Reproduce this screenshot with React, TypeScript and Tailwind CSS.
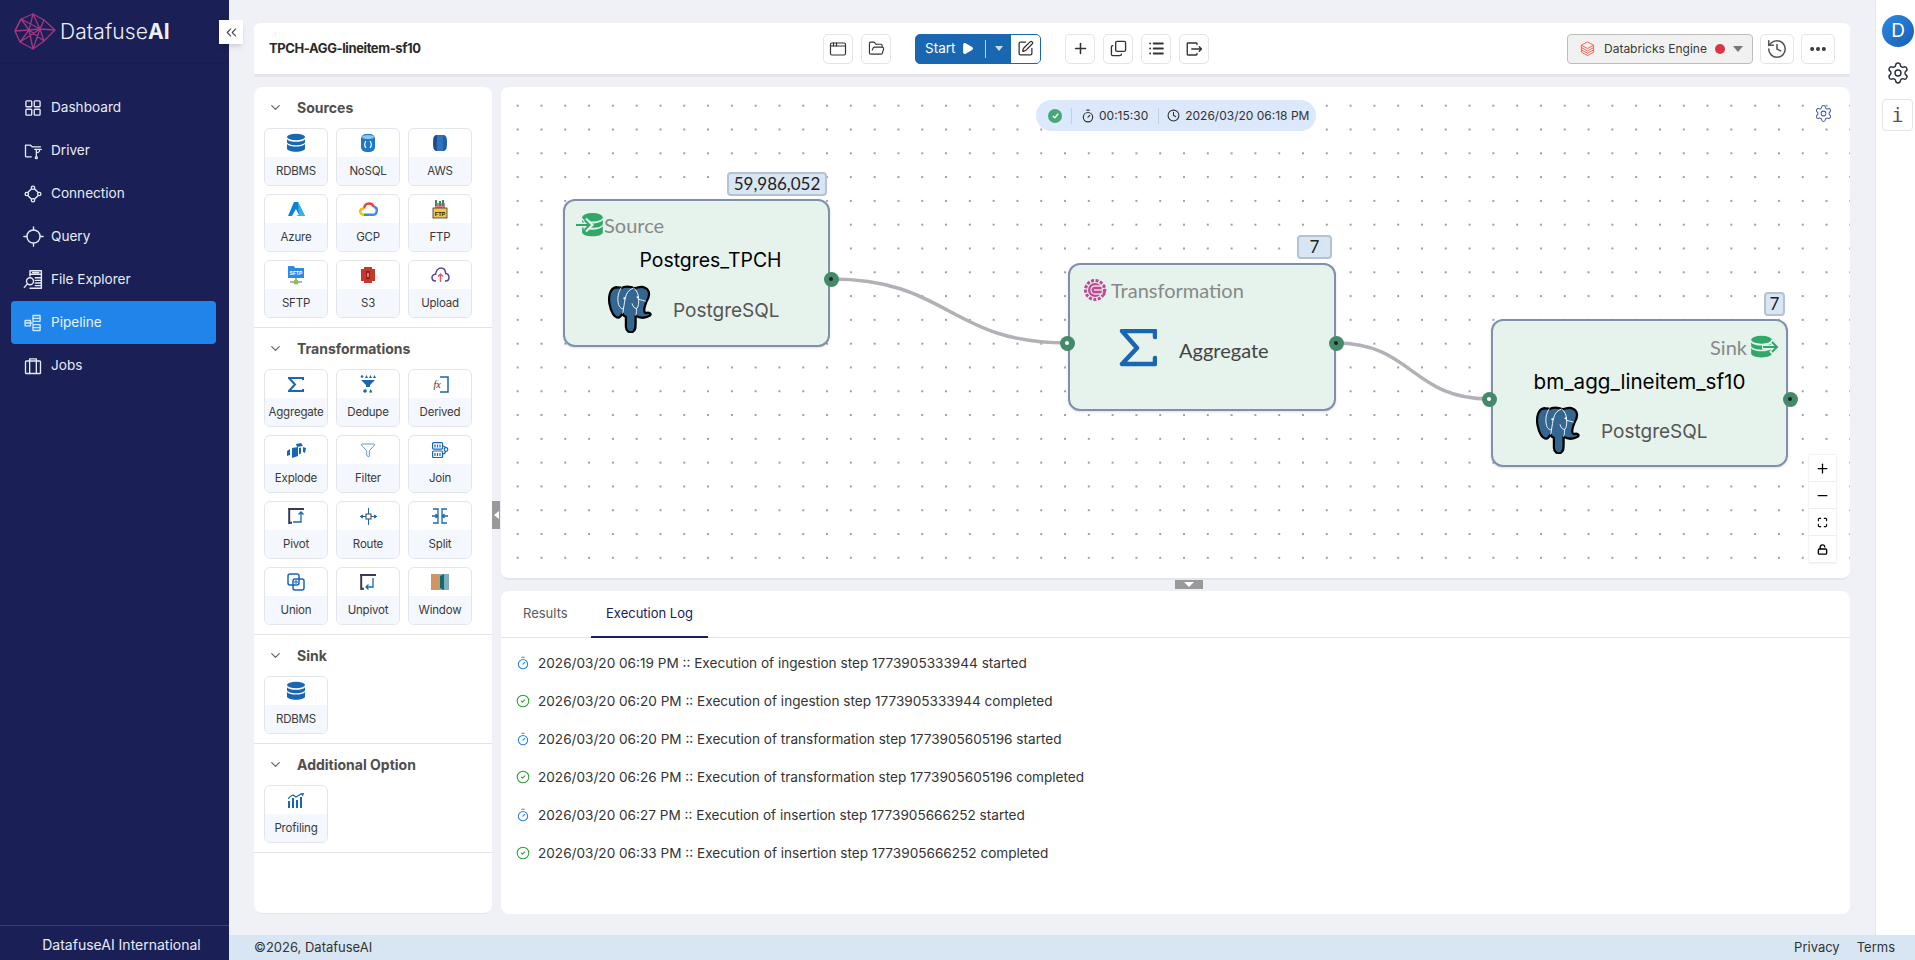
import React from "react";
import {
  ChevronDown, ChevronsLeft, Play, SquarePen, Plus, Copy, List, FolderOpen, AppWindow, History, Ellipsis,
  Settings, Timer, Clock, CircleCheck, Maximize, LockOpen, Minus, Funnel,
} from "lucide-react";

const B = "#1a67b1";

const S = ({ children, s = 20, vb = "0 0 24 24", sw = 1.6, c = "currentColor" }: any) => (
  <svg width={s} height={s} viewBox={vb} fill="none" stroke={c} strokeWidth={sw} strokeLinecap="round" strokeLinejoin="round">
    {children}
  </svg>
);

const Logo = () => (
  <svg width="42" height="38" viewBox="0 0 42 38" fill="none" stroke="#a5367f" strokeWidth="1.300" strokeLinejoin="round">
    <path d="M1 18 L7 6 L19 1 L30 7 L41 17 L30 28 L19 36 L6 29 Z" />
    <path d="M7 6 L15 17 L19 1 L26 16 L30 7 M1 18 L15 17 L26 16 L41 17 M15 17 L6 29 M15 17 L19 36 M26 16 L19 36 M26 16 L30 28 M7 6 L1 18 M7 6 L26 16 M6 29 L26 16 M15 17 L30 28" />
  </svg>
);

const navIcons: Record<string, React.ReactNode> = {
  Dashboard: <S s={20}><rect x="3.5" y="3.5" width="7" height="7" rx="1" /><rect x="13.5" y="3.5" width="7" height="7" rx="1" /><rect x="3.5" y="13.5" width="7" height="7" rx="1" /><rect x="13.5" y="13.5" width="7" height="7" rx="1" /></S>,
  Driver: <S s={20}><path d="M10 19H4a1 1 0 0 1-1-1V5h6l2 2h10" /><path d="M14 10h8M16 10v8M20 10c0 4-2 4-4 4" /><circle cx="16" cy="20" r="1.2" /></S>,
  Connection: <S s={20}><path d="M6 10l4-4M14 6l4 4M18 14l-4 4M10 18l-4-4" /><circle cx="12" cy="4.5" r="2" /><circle cx="19.5" cy="12" r="2" /><circle cx="12" cy="19.5" r="2" /><circle cx="4.5" cy="12" r="2" /></S>,
  Query: <S s={21}><circle cx="12" cy="12" r="7.5" /><path d="M12 1v3M12 20v3M1 12h3M20 12h3" /></S>,
  "File Explorer": <S s={21}><path d="M8 8V2h13v20H8" /><path d="M8 6h13M14 10h7M14 13h7M14 16h7M14 19h7M11 4h7" /><circle cx="8" cy="14" r="4" /><path d="M5 17l-3.5 4" /></S>,
  Pipeline: <S s={20} c="#cfe6ff"><rect x="2.5" y="9" width="6.5" height="6.5" /><rect x="12" y="3" width="8.5" height="7" /><rect x="12" y="14" width="8.5" height="7" /><path d="M2.500 12h6.500M12 6.500h8.500M12 17.500h8.500M9 12h3" /></S>,
  Jobs: <S s={20}><rect x="3" y="6" width="18" height="15" rx="1" /><path d="M8 6v15M16 6v15M8 6V3.500h8V6" /></S>,
};

const Db = ({ c = B, s = 20 }: any) => (
  <svg width={s} height={s} viewBox="0 0 20 20" fill={c}>
    <ellipse cx="10" cy="4" rx="9" ry="3.200" />
    <path d="M1 6.200c1.500 1.800 5 2.600 9 2.600s7.500-.8 9-2.600V9c0 1.800-4 3.200-9 3.200S1 10.800 1 9z" />
    <path d="M1 11c1.500 1.800 5 2.600 9 2.600s7.500-.8 9-2.600v4.500c0 1.800-4 3.200-9 3.200s-9-1.400-9-3.200z" />
  </svg>
);

const ico: Record<string, React.ReactNode> = {
  RDBMS: <Db />,
  NoSQL: (
    <svg width="16" height="20" viewBox="0 0 16 20"><rect x="1" y="1" width="14" height="18" rx="5" fill="#1e78c8" /><ellipse cx="8" cy="4" rx="6" ry="2" fill="#8fc4ee" /><path d="M6 8c-1.500 2-1.500 5 0 7M10 8c1.500 2 1.500 5 0 7" stroke="#fff" strokeWidth="1.200" fill="none" /></svg>
  ),
  AWS: (
    <svg width="16" height="18" viewBox="0 0 16 18"><path d="M5 1C2 1 1 3 1 9s1 8 4 8z" fill="#1a4f8f" /><rect x="5" y="1" width="6" height="16" fill="#2e73b8" /><path d="M11 1c3 0 4 2 4 8s-1 8-4 8z" fill="#1f5fa3" /></svg>
  ),
  Azure: (
    <svg width="18" height="16" viewBox="0 0 18 16"><path d="M7 1h4l7 14H9l3-1-3-6-4 7H1z" fill="#0a84d6" /><path d="M11 1l7 14h-6z" fill="#34b2ee" /></svg>
  ),
  GCP: (
    <svg width="19" height="15" viewBox="0 0 19 15" fill="none" strokeWidth="2.400"><path d="M5 6.500C5.500 3 8 1.500 10 1.500c2.500 0 4 1.300 4.700 3.300" stroke="#ea4335" /><path d="M14.700 4.800c2.400.4 3.300 2.300 3.100 4" stroke="#4285f4" /><path d="M17.800 8.800c-.2 2.500-2 4-4 4H9" stroke="#4285f4" /><path d="M9 12.800H5" stroke="#34a853" /><path d="M5 12.800c-2.300 0-3.800-1.500-3.800-3.300 0-2 1.600-3 3.800-3" stroke="#fbbc05" /></svg>
  ),
  FTP: (
    <svg width="16" height="20" viewBox="0 0 16 20"><path d="M3 4h10v6H3z" fill="#e8769a" /><path d="M4 1v6M8 2v5M11 1v6" stroke="#3a8a5a" strokeWidth="2" /><rect x="1" y="9" width="14" height="10" fill="#f3c64a" stroke="#333" strokeWidth=".8" /><text x="8" y="16.500" fontSize="5.500" fontWeight="700" textAnchor="middle" fill="#222" fontFamily="Liberation Sans">FTP</text></svg>
  ),
  SFTP: (
    <svg width="16" height="20" viewBox="0 0 16 20"><path d="M0 1h6l1 2h9v10H0z" fill="#2a8ce0" /><text x="8" y="10" fontSize="5" fontWeight="700" textAnchor="middle" fill="#fff" fontFamily="Liberation Sans">SFTP</text><path d="M8 13v3M2 17h12" stroke="#666" strokeWidth="1" /><circle cx="8" cy="17" r="2.500" fill="#8bc34a" /></svg>
  ),
  S3: (
    <svg width="14" height="16" viewBox="0 0 14 16"><path d="M3 0h8v2h3v12h-3v2H3v-2H0V2h3z" fill="#c6382e" /><path d="M5 4h4v8H5z" fill="#8f241c" /><path d="M6 6h2v4H6z" fill="#e67a6e" /></svg>
  ),
  Upload: (
    <svg width="19" height="16" viewBox="0 0 19 16" fill="none" strokeWidth="1.500"><path d="M5 14H4.500C2 14 1 12 1 10.500S2.500 7.200 4.500 7.300C5 3.500 7.500 1 10 1c2.500 0 4.500 2.200 4.700 5.500 2 .2 3.300 2 3.300 4s-1.300 3.500-3.500 3.500H14" stroke="#5b3f9e" /><path d="M9.500 15V7M7 9.500l2.500-2.500 2.500 2.500" stroke="#e85c6a" /></svg>
  ),
  Aggregate: (
    <svg width="16" height="15" viewBox="0 0 16 15" fill="none" stroke={B} strokeWidth="2"><path d="M15 3V1H1l6 6.500L1 14h14v-2" /></svg>
  ),
  Dedupe: (
    <svg width="16" height="18" viewBox="0 0 16 18" fill={B}><circle cx="2" cy="1.500" r="1.300" /><path d="M5 3l1.500-3L8 3zM9 3l1.500-3L12 3zM13 3l1.500-3L16 3z" /><path d="M1 5h14l-5 5v2H6v-2z" /><circle cx="5" cy="16" r="1.800" /><path d="M9 17.500l1.700-3.500 1.700 3.500z" /></svg>
  ),
  Derived: (
    <svg width="18" height="17" viewBox="0 0 18 17" fill="none"><path d="M9 1h8v15H9" stroke={B} strokeWidth="1.500" /><text x="6" y="12" fontSize="10" fontStyle="italic" textAnchor="middle" fill="#333" fontFamily="Liberation Serif">fx</text></svg>
  ),
  Explode: (
    <svg width="19" height="15" viewBox="0 0 19 15" fill={B}><path d="M5 5l6-1v9l-6 2z" /><path d="M9 1l5-1 2 3-6 1z" /><path d="M12 5l2-.5v6l-2 1z" /><path d="M0 8l3-2v6l-3 1zM16 4l3 1-1 5-2-1z" /></svg>
  ),
  Filter: <Funnel size={16} color={B} strokeWidth={1} />,
  Join: (
    <svg width="17" height="16" viewBox="0 0 17 16" fill="none" stroke={B} strokeWidth="1.200"><rect x=".6" y=".6" width="10" height="6.500" rx="1" /><rect x=".6" y="9" width="10" height="6.500" rx="1" /><path d="M3 2.500v3M5.500 2.500v3M8 2.500v3M3 11v3M5.500 11v3M8 11v3M10.600 4c2 0 3 .5 3 2M10.600 12c2 0 3-1 3-3" /><circle cx="14" cy="7.500" r="1.800" /></svg>
  ),
  Pivot: (
    <svg width="16" height="16" viewBox="0 0 16 16" fill="none"><path d="M0 1h16M1.200 1v15M1 14.800h3" stroke="#3a3a55" strokeWidth="2" /><path d="M5 14h8V4M10.500 6.500L13 4l2.500 2.500" stroke={B} strokeWidth="1.300" /></svg>
  ),
  Route: (
    <svg width="17" height="17" viewBox="0 0 17 17" fill="none" stroke={B} strokeWidth="1"><rect x="6" y="6" width="5" height="5" stroke="#3a3a55" /><path d="M8.500 0v6M8.500 11v6M0 8.500h6M11 8.500h6" /><path d="M.5 8.500l2-1.500v3zM16.500 8.500l-2-1.500v3z" fill={B} /></svg>
  ),
  Split: (
    <svg width="16" height="16" viewBox="0 0 16 16" fill="none" stroke={B} strokeWidth="1.300"><path d="M1 1h5v14H1M15 1h-5v14h5M0 8h5M16 8h-5M3.500 6l2 2-2 2M12.500 6l-2 2 2 2" /></svg>
  ),
  Union: (
    <svg width="18" height="18" viewBox="0 0 18 18" fill="none" stroke={B} strokeWidth="1.500"><rect x="1" y="1" width="11" height="11" rx="2" /><rect x="6" y="6" width="11" height="11" rx="2" /><path d="M9 7v4M7 9h4" strokeWidth="1" /></svg>
  ),
  Unpivot: (
    <svg width="16" height="16" viewBox="0 0 16 16" fill="none"><path d="M0 1h16M1.200 1v15M1 14.800h3" stroke="#3a3a55" strokeWidth="2" /><path d="M13 4v9H6M8.500 10.500L6 13l2.500 2.500" stroke={B} strokeWidth="1.300" /></svg>
  ),
  Window: (
    <svg width="18" height="16" viewBox="0 0 18 16"><rect width="18" height="16" fill="#7fb0b8" /><path d="M0 0h7l2 2v12l-2 2H0z" fill="#d29463" /><path d="M9 2l4-2v16l-4-2z" fill="#0f6a78" /></svg>
  ),
  Profiling: (
    <svg width="16" height="15" viewBox="0 0 16 15" fill={B}><rect x="0" y="8" width="2" height="7" /><rect x="4" y="5" width="2" height="10" /><rect x="8" y="7" width="2" height="8" /><rect x="12" y="4" width="2" height="11" /><path d="M0 6c2-3 3-3 5-4l3 2 5-3" fill="none" stroke={B} strokeWidth="1.200" /><path d="M12 .2l4-.2-1 3.500z" /></svg>
  ),
};

const Card = ({ label }: { label: string }) => (
  <div className="w-[64px] h-[58px] rounded-[6px] border border-[#e2e5ec] overflow-hidden flex flex-col bg-white">
    <div className="h-[28px] flex items-center justify-center">{ico[label]}</div>
    <div className="h-[28px] pt-[1px] flex items-center justify-center bg-[#f4f7fd] text-[11.5px] text-[#3a3a3a] tracking-[-0.2px] whitespace-nowrap">{label}</div>
  </div>
);

const Section = ({ title, items }: { title: string; items: string[] }) => (
  <div className="border-b border-[#e3e3e6] pb-[9px] pl-[10px]">
    <div className="h-[41px] flex items-center text-[14px] font-bold text-[#4e4e4e]">
      <ChevronDown size={15} className="ml-[4px] mr-[14px] text-[#666]" />
      {title}
    </div>
    <div className="grid grid-cols-[64px_64px_64px] gap-x-[8px] gap-y-[8px]">
      {items.map((i) => (
        <Card key={i} label={i} />
      ))}
    </div>
  </div>
);

const Elephant = () => (
  <svg width="46" height="48" viewBox="1 1 43 47">
    <path d="M9 3C3 4 1 12 2.500 20c1.300 7 4.500 13 8.500 13 2 0 3-2 4-4 1 2 2 3 3.500 3v10c0 4 3.500 6 6.500 5 3-1 3-5 3-9v-7c4 2.500 9.500 2.500 14 0 2-2-1-3.500-4-2.500-3-1-1-7 .5-11 4.500-7 3-13-3-14.500-3-.8-6.500 1-9 1-4-2-10-2-12 0-2-1-3.500-1-5.500-.5z" fill="#336791" stroke="#000" strokeWidth="2.200" strokeLinejoin="round" />
    <path d="M14 3.500c-3 5-4 10-3 15 .5 4 3 6 5 6 1-4 1-9 3-14 1-3 3-5 7-6.500M26 4c3 2 5 6 5 11 0 4 0 7-2 9-2 0-4-2-4.500-5M15 29c1-2 1-3 1-5M28 31c1-3 1-5 1-7M31 15c3 1 5 1 7 2" fill="none" stroke="#fff" strokeWidth=".9" />
    <circle cx="17" cy="14" r="1.100" fill="#fff" />
    <circle cx="30" cy="13" r="1.100" fill="#fff" />
  </svg>
);

const Handle = ({ type, x, y }: { type: "in" | "out"; x: number; y: number }) => (
  <div style={{ left: x - 7.5, top: y - 7.5 }} className="absolute w-[15px] h-[15px] rounded-full bg-[#45896a] flex items-center justify-center">
    <div className={type === "in" ? "w-[4px] h-[4px] rounded-full bg-white" : "w-[4px] h-[4px] rounded-full bg-[#12281e]"} />
  </div>
);

const Count = ({ children, style }: any) => (
  <div style={style} className="absolute h-[24px] flex items-center justify-center bg-[#d8e6f3] border-2 border-[#b4c2d4] rounded-[4px] font-['Lato'] text-[17px] text-[#222]">
    {children}
  </div>
);

const Node = ({ style, children }: any) => (
  <div style={style} className="absolute rounded-[12px] border-2 border-[#8090ab] bg-[#e6f2ec] flex flex-col shadow-sm">
    {children}
  </div>
);

const G = "#2fa868";
const SourceIc = () => (
  <svg width="28" height="26" viewBox="0 0 28 26">
    <g transform="translate(5 0) scale(1.150 1.300)"><ellipse cx="10" cy="4" rx="9" ry="3.300" fill={G} /><path d="M1 6.200c1.500 1.800 5 2.600 9 2.600s7.500-.8 9-2.600V9c0 1.800-4 3.200-9 3.200S1 10.800 1 9z" fill={G} /><path d="M1 11c1.500 1.800 5 2.600 9 2.600s7.500-.8 9-2.600v4.500c0 1.800-4 3.200-9 3.200s-9-1.400-9-3.200z" fill={G} /></g>
    <path d="M0 13h14M9 7.500l5.500 5.500L9 18.500" fill="none" stroke="#e6f2ec" strokeWidth="5" />
    <path d="M0 13h13M8.500 8l5 5-5 5" fill="none" stroke={G} strokeWidth="2" />
  </svg>
);
const SinkIc = () => (
  <svg width="29" height="24" viewBox="0 0 29 24">
    <g transform="scale(1.150 1.200)"><ellipse cx="10" cy="4" rx="9" ry="3.300" fill={G} /><path d="M1 6.200c1.500 1.800 5 2.600 9 2.600s7.500-.8 9-2.600V9c0 1.800-4 3.200-9 3.200S1 10.800 1 9z" fill={G} /><path d="M1 11c1.500 1.800 5 2.600 9 2.600s7.500-.8 9-2.600v4.500c0 1.800-4 3.200-9 3.200s-9-1.400-9-3.200z" fill={G} /></g>
    <path d="M12 12h15M21 5.500l6.500 6.500-6.500 6.500" fill="none" stroke="#e6f2ec" strokeWidth="5" />
    <path d="M13 12h14M22 7l5 5-5 5" fill="none" stroke={G} strokeWidth="2" />
  </svg>
);
const TransIc = () => (
  <svg width="25" height="24" viewBox="0 0 25 24" fill="none">
    <circle cx="12" cy="12" r="9.500" stroke="#bb4a92" strokeWidth="3" strokeDasharray="3 1.500" />
    <circle cx="12" cy="12" r="7" fill="#bb4a92" />
    <path d="M20 8h-8c-3 0-4 2-4 4s1 4 4 4h8M20 12h-9" stroke="#f2d7e8" strokeWidth="1.300" />
    <circle cx="21" cy="8" r="1.500" fill="#bb4a92" /><circle cx="22" cy="12" r="1.500" fill="#bb4a92" /><circle cx="21" cy="16" r="1.500" fill="#bb4a92" />
  </svg>
);

const logs: [string, boolean][] = [
  ["2026/03/20 06:19 PM :: Execution of ingestion step 1773905333944 started", false],
  ["2026/03/20 06:20 PM :: Execution of ingestion step 1773905333944 completed", true],
  ["2026/03/20 06:20 PM :: Execution of transformation step 1773905605196 started", false],
  ["2026/03/20 06:26 PM :: Execution of transformation step 1773905605196 completed", true],
  ["2026/03/20 06:27 PM :: Execution of insertion step 1773905666252 started", false],
  ["2026/03/20 06:33 PM :: Execution of insertion step 1773905666252 completed", true],
];

const TB = ({ children, cls = "w-[30px]" }: any) => (
  <div className={`h-[30px] ${cls} rounded-[5px] border border-[#e4e4e8] bg-white flex items-center justify-center text-[#333]`}>{children}</div>
);

export default function App() {
  return (
    <div className="w-[1915px] h-[960px] flex overflow-hidden bg-[#eff1f6] font-['Inter',sans-serif]">
      {/* Sidebar */}
      <aside className="relative w-[229px] shrink-0 bg-[#1a2055] flex flex-col text-[#e8ebf5]">
        <div className="h-[64px] border-b border-[#171c4c] flex items-center pl-[14px] gap-[4px]">
          <Logo />
          <span className="text-[21px] font-light tracking-[0.1px] text-[#eef0f8]">Datafuse<b className="font-bold">AI</b></span>
        </div>
        <button className="absolute left-[219px] top-[20px] w-[24px] h-[24px] bg-white shadow-md flex items-center justify-center text-[#444]">
          <ChevronsLeft size={17} strokeWidth={1.500} />
        </button>
        <nav className="pt-[22px] pl-[11px] pr-[13px] flex flex-col">
          {Object.keys(navIcons).map((n) => (
            <div key={n} className={n === "Pipeline" ? "h-[43px] rounded-[4px] bg-[#1f85ea] flex items-center pl-[11px] gap-[7px] text-[13.6px] text-[#eaf3fd]" : "h-[43px] flex items-center pl-[11px] gap-[7px] text-[13.6px]"}>
              <span className="w-[22px] flex justify-center">{navIcons[n]}</span>
              {n}
            </div>
          ))}
        </nav>
        <div className="mt-auto h-[35px] border-t border-[#3a3f6e] pt-[3px] pl-[14px] flex items-center justify-center text-[14px]">DatafuseAI International</div>
      </aside>

      {/* Main */}
      <div className="flex-1 flex flex-col min-w-0">
        <div className="h-[935px] flex">
          <div className="flex-1 min-w-0 pt-[23px] pl-[25px] pr-[25px] pb-[21px] flex flex-col gap-[11px]">
            {/* Toolbar */}
            <header className="h-[54px] -mb-[1px] shrink-0 rounded-t-[6px] bg-white border-b-[3px] border-[#e3e5ea] flex items-center pl-[15px] pr-[15px]">
              <div className="w-[554px] text-[13px] font-bold tracking-[-0.4px] text-[#2a2a2a] whitespace-nowrap">TPCH-AGG-lineitem-sf10</div>
              <div className="flex gap-[8px]">
                <TB><AppWindow size={18} strokeWidth={1.600} /></TB>
                <TB><FolderOpen size={17} strokeWidth={1.600} /></TB>
              </div>
              <div className="ml-[24px] h-[30px] w-[126px] flex rounded-[5px] overflow-hidden border border-[#1a67b1] bg-[#1a67b1] text-white">
                <div className="flex-1 flex items-center pl-[9px] text-[13.5px]">
                  Start
                  <Play size={13} fill="#fff" className="ml-[6px]" />
                  <span className="ml-[11px] h-[18px] w-px bg-[#b7d2ec]" />
                  <span className="ml-[9px] border-x-[4px] border-x-transparent border-t-[5px] border-t-[#cfe0f1]" />
                </div>
                <div className="w-[29px] bg-white flex items-center justify-center text-[#333]"><SquarePen size={17} strokeWidth={1.800} /></div>
              </div>
              <div className="ml-[24px] flex gap-[8px]">
                <TB><Plus size={17} strokeWidth={2.200} /></TB>
                <TB><Copy size={17} strokeWidth={1.900} className="-scale-x-100 rotate-180" /></TB>
                <TB><List size={17} strokeWidth={2.600} /></TB>
                <TB>
                  <S s={18} sw={1.800}><path d="M16 6V5a1 1 0 0 0-1-1H4a1 1 0 0 0-1 1v14a1 1 0 0 0 1 1h11a1 1 0 0 0 1-1v-1" /><path d="M9 12h13M19 9l3 3-3 3" /></S>
                </TB>
              </div>
              <div className="ml-auto flex gap-[7px]">
                <div className="h-[30px] w-[186px] rounded-[4px] border border-[#bdbdbd] bg-[#f1f1f1] flex items-center pl-[12px] text-[12px] text-[#3a3a3a]">
                  <svg width="15" height="15" viewBox="0 0 16 16" fill="none" stroke="#f0604d" strokeWidth="1"><path d="M8 1l6.500 3.500L8 8 1.500 4.500zM1.500 7L8 10.500 14.500 7M1.500 9.500L8 13l6.500-3.500M1.500 12L8 15.500l6.500-3.500M1.500 4.500V12M14.500 4.500V12" /></svg>
                  <span className="ml-[9px]">Databricks Engine</span>
                  <span className="ml-[8px] w-[10px] h-[10px] rounded-full bg-[#dc3545]" />
                  <span className="ml-[8px] border-x-[5px] border-x-transparent border-t-[6px] border-t-[#777]" />
                </div>
                <TB cls="w-[34px]"><History size={22} strokeWidth={1.700} className="text-[#555]" /></TB>
                <TB cls="w-[34px]"><Ellipsis size={20} strokeWidth={2.800} /></TB>
              </div>
            </header>

            <div className="flex-1 flex gap-[9px] min-h-0">
              {/* Palette */}
              <div className="relative w-[238px] shrink-0 rounded-[8px] bg-white border-b border-[#e3e5ea]">
                <Section title="Sources" items={["RDBMS", "NoSQL", "AWS", "Azure", "GCP", "FTP", "SFTP", "S3", "Upload"]} />
                <Section title="Transformations" items={["Aggregate", "Dedupe", "Derived", "Explode", "Filter", "Join", "Pivot", "Route", "Split", "Union", "Unpivot", "Window"]} />
                <Section title="Sink" items={["RDBMS"]} />
                <Section title="Additional Option" items={["Profiling"]} />
                <div className="absolute left-[238px] top-[414px] w-[8px] h-[28px] bg-[#999] flex items-center justify-center">
                  <span className="border-y-[4px] border-y-transparent border-r-[5px] border-r-white" />
                </div>
              </div>

              <div className="flex-1 flex flex-col gap-[11px] min-w-0">
                {/* Canvas */}
                <div className="relative h-[493px] shrink-0 rounded-[8px] bg-white border-b-2 border-[#e3e5ea] bg-[radial-gradient(circle,#a0a0a0_1px,transparent_1.2px)] bg-[length:23.8px_23.8px] bg-[position:4.8px_6.8px]">
                  <svg className="absolute inset-0" width="1349" height="493" fill="none" stroke="#b1b1b7" strokeWidth="3.500">
                    <path d="M330 192C448 192 448 256 566 256" />
                    <path d="M835 256C911 256 911 312 988 312" />
                  </svg>

                  <div className="absolute left-[535px] top-[13px] h-[31px] w-[280px] rounded-full bg-[#dce8fb] flex items-center text-[12px] text-[#333]">
                    <span className="ml-[12px] w-[14px] h-[14px] rounded-full bg-[#46a877] flex items-center justify-center">
                      <svg width="9" height="9" viewBox="0 0 10 10" fill="none" stroke="#fff" strokeWidth="1.600"><path d="M2 5.500L4.200 7.500 8 3" /></svg>
                    </span>
                    <span className="ml-[9px] w-px h-[16px] bg-[#c5cfdf]" />
                    <Timer size={14} className="ml-[9px]" />
                    <span className="ml-[4px]">00:15:30</span>
                    <span className="ml-[10px] w-px h-[16px] bg-[#c5cfdf]" />
                    <Clock size={13} className="ml-[8px]" />
                    <span className="ml-[5px]">2026/03/20 06:18 PM</span>
                  </div>
                  <Settings size={19} strokeWidth={1.300} color="#4a5bad" className="absolute left-[1313px] top-[17px]" />

                  <Count style={{ left: 226, top: 85, width: 100 }}>59,986,052</Count>
                  <Node style={{ left: 62, top: 112, width: 267, height: 148 }}>
                    <div className="mt-[11px] ml-[11px] flex items-center h-[26px]">
                      <SourceIc />
                      <span className="font-['Lato'] text-[20px] text-[#888]">Source</span>
                    </div>
                    <div className="mt-[11px] pl-[28px] h-[24px] flex items-center justify-center text-[19.400px] text-black">Postgres_TPCH</div>
                    <div className="mt-[12px] ml-[42px] flex items-center">
                      <Elephant />
                      <span className="ml-[20px] mt-[4px] text-[19px] text-[#555]">PostgreSQL</span>
                    </div>
                  </Node>

                  <Count style={{ left: 796, top: 148, width: 35 }}>7</Count>
                  <Node style={{ left: 567, top: 176, width: 268, height: 148 }}>
                    <div className="mt-[12px] ml-[13px] flex items-center h-[26px] gap-[3px]">
                      <TransIc />
                      <span className="font-['Lato'] text-[20px] text-[#888]">Transformation</span>
                    </div>
                    <div className="mt-[26px] ml-[49px] flex items-center">
                      <svg width="38" height="38" viewBox="0 0 38 38" fill="none" stroke={B} strokeWidth="4.500" strokeLinecap="round" strokeLinejoin="round"><path d="M36 8V2H3l15 17L3 35h33v-6" /></svg>
                      <span className="ml-[22px] mt-[4px] font-['Lato'] text-[20px] text-[#444]">Aggregate</span>
                    </div>
                  </Node>

                  <Count style={{ left: 1263, top: 205, width: 21 }}>7</Count>
                  <Node style={{ left: 990, top: 232, width: 297, height: 148 }}>
                    <div className="mt-[13px] mr-[7px] flex items-center justify-end h-[26px] gap-[3px]">
                      <span className="font-['Lato'] text-[20px] text-[#888]">Sink</span>
                      <SinkIc />
                    </div>
                    <div className="mt-[10px] h-[24px] flex items-center justify-center text-[20.600px] text-black">bm_agg_lineitem_sf10</div>
                    <div className="mt-[12px] ml-[42px] flex items-center">
                      <Elephant />
                      <span className="ml-[20px] mt-[4px] text-[19px] text-[#555]">PostgreSQL</span>
                    </div>
                  </Node>

                  <Handle type="out" x={330} y={192} />
                  <Handle type="in" x={566} y={256} />
                  <Handle type="out" x={835} y={256} />
                  <Handle type="in" x={988} y={312} />
                  <Handle type="out" x={1289} y={312} />

                  <div className="absolute left-[1308px] top-[368px] w-[27px] bg-white shadow-[0_0_2px_rgba(0,0,0,0.15)] flex flex-col">
                    {[<Plus key="a" size={15} />, <Minus key="b" size={15} />, <Maximize key="c" size={11} strokeWidth={2.400} />, <LockOpen key="d" size={11} strokeWidth={3} />].map((ic, i) => (
                      <div key={i} className="h-[27px] flex items-center justify-center border-b border-[#eee] text-black">{ic}</div>
                    ))}
                  </div>

                  <div className="absolute left-[674px] -bottom-[11px] w-[28px] h-[9px] bg-[#999] flex items-center justify-center">
                    <span className="border-x-[5px] border-x-transparent border-t-[5px] border-t-white" />
                  </div>
                </div>

                {/* Bottom */}
                <div className="flex-1 rounded-[8px] bg-white min-h-0">
                  <div className="h-[47px] border-b border-[#e3e3e6] flex text-[13px]">
                    <div className="w-[90px] flex items-center pl-[22px] text-[#5a5a5a]">Results</div>
                    <div className="w-[117px] -mb-px border-b-2 border-[#1a2055] flex items-center justify-center text-[#1a2055]">Execution Log</div>
                  </div>
                  <div className="pt-[6px] pl-[15px] flex flex-col">
                    {logs.map(([t, done]) => (
                      <div key={t} className="h-[38px] flex items-center gap-[8px] text-[13.600px] text-[#333]">
                        {done ? <CircleCheck size={14} color="#2a9d3a" strokeWidth={1.800} /> : <Timer size={14} color="#1f85ea" strokeWidth={1.800} />}
                        {t}
                      </div>
                    ))}
                  </div>
                </div>
              </div>
            </div>
          </div>

          {/* Rail */}
          <div className="w-[40px] shrink-0 bg-white border-l border-[#e3e5ea] flex flex-col items-start pl-[6px] pt-[15px]">
            <div className="w-[32px] h-[32px] rounded-full bg-gradient-to-br from-[#2a8ae8] to-[#1a5fb0] flex items-center justify-center text-white text-[19px]">D</div>
            <Settings size={24} strokeWidth={1.400} className="mt-[14px] ml-[4px] text-[#2a2a40]" />
            <div className="mt-[14px] w-[31px] h-[32px] rounded-[4px] border border-[#e4e4e8] flex items-center justify-center font-['DejaVu_Sans_Mono'] text-[20px] text-[#555]">i</div>
          </div>
        </div>
        <footer className="h-[25px] bg-[#d8e6f3] flex items-center pl-[25px] pr-[20px] text-[13px] text-[#333]">
          ©2026, DatafuseAI
          <span className="ml-auto">Privacy</span>
          <span className="ml-[17px]">Terms</span>
        </footer>
      </div>
    </div>
  );
}
